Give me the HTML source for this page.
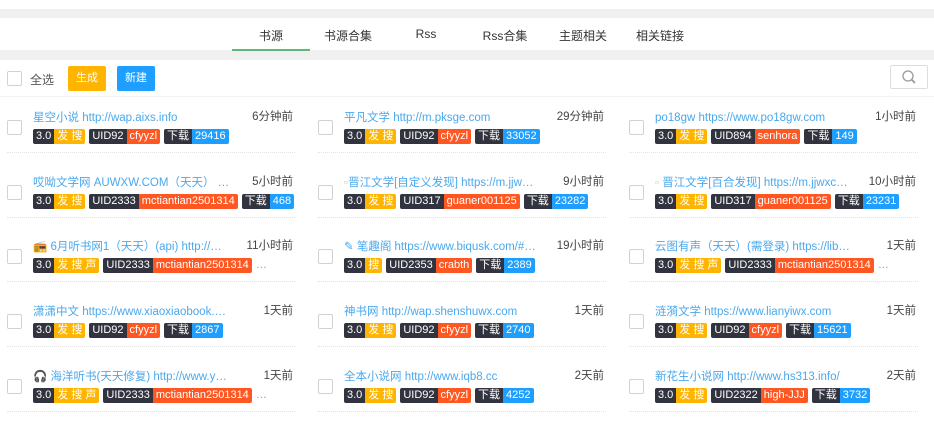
<!DOCTYPE html>
<html><head><meta charset="utf-8"><style>
*{box-sizing:border-box;margin:0;padding:0}
body{width:934px;height:433px;overflow:hidden;background:#fff;font-family:"Liberation Sans","Noto Sans CJK SC",sans-serif;position:relative}
.band{position:absolute;left:0;width:934px;background:#f0f0f0}
.tab{position:absolute;top:27px;font-size:12px;color:#333;width:78px;text-align:center}
.cb{position:absolute;width:15px;height:15px;border:1px solid #d2d2d2;border-radius:2px;background:#fff}
.it{position:absolute;height:44px}
.it .t{position:absolute;top:1px;left:26px;font-size:11.5px;color:#4aa8ec;white-space:nowrap;line-height:16px}
.it .tm{position:absolute;top:0;right:2px;font-size:11.5px;color:#444;line-height:16px}
.it .tg{position:absolute;top:20px;left:26px;display:flex;white-space:nowrap}
.it .cb{left:0;top:11px}
.it .sep{position:absolute;left:0;right:0;top:43px;border-top:1px dotted #e4e4e4}
.g{display:inline-flex;margin-right:4px;border-radius:2px;overflow:hidden;height:15px;font-size:11px;line-height:15px;color:#fff}
.g span{padding:0 3px}
.d{background:#31343f}.y{background:#ffb400}.r{background:#ff5722}.b{background:#1e9fff}
.e{font-size:11px;color:#999;line-height:15px}
</style></head><body>
<div class="band" style="top:9px;height:9px"></div>
<div class="band" style="top:50px;height:10px"></div>
<div class="tab" style="left:232px">书源</div>
<div style="position:absolute;left:232px;top:49px;width:78px;height:2px;background:#5fb878"></div>
<div class="tab" style="left:309px">书源合集</div>
<div class="tab" style="left:387px">Rss</div>
<div class="tab" style="left:466px">Rss合集</div>
<div class="tab" style="left:544px">主题相关</div>
<div class="tab" style="left:621px">相关链接</div>

<div class="cb" style="left:7px;top:71px"></div>
<div style="position:absolute;left:30px;top:71px;font-size:12px;color:#555">全选</div>
<div style="position:absolute;left:68px;top:66px;width:38px;height:25px;background:#ffb400;border-radius:2px;color:#fff;font-size:11px;text-align:center;line-height:25px">生成</div>
<div style="position:absolute;left:117px;top:66px;width:38px;height:25px;background:#1e9fff;border-radius:2px;color:#fff;font-size:11px;text-align:center;line-height:25px">新建</div>
<div style="position:absolute;left:890px;top:65px;width:38px;height:24px;border:1px solid #ddd;border-radius:2px">
<svg width="38" height="24" style="position:absolute;left:-1px;top:-1px"><circle cx="18" cy="11" r="5" fill="none" stroke="#999" stroke-width="1.3"/><line x1="21.5" y1="14.5" x2="25" y2="18" stroke="#999" stroke-width="1.8"/></svg></div>
<div style="position:absolute;left:0;top:96px;width:934px;border-top:1px solid #f2f2f2"></div>

<!-- column 1 -->
<div class="it" style="left:7px;top:109px;width:288px"><div class="cb"></div><div class="t">星空小说 http://wap.aixs.info</div><div class="tm">6分钟前</div><div class="tg"><span class="g"><span class="d">3.0</span><span class="y">发 搜</span></span><span class="g"><span class="d">UID92</span><span class="r">cfyyzl</span></span><span class="g"><span class="d">下载</span><span class="b">29416</span></span></div><div class="sep"></div></div>
<div class="it" style="left:7px;top:174px;width:288px"><div class="cb"></div><div class="t">哎呦文学网 AUWXW.COM（天天） …</div><div class="tm">5小时前</div><div class="tg"><span class="g"><span class="d">3.0</span><span class="y">发 搜</span></span><span class="g"><span class="d">UID2333</span><span class="r">mctiantian2501314</span></span><span class="g"><span class="d">下载</span><span class="b">468</span></span></div><div class="sep"></div></div>
<div class="it" style="left:7px;top:238px;width:288px"><div class="cb"></div><div class="t"><span style="color:#333">📻</span> 6月听书网1（天天）(api) http://…</div><div class="tm">11小时前</div><div class="tg"><span class="g"><span class="d">3.0</span><span class="y">发 搜 声</span></span><span class="g"><span class="d">UID2333</span><span class="r">mctiantian2501314</span></span><span class="e">…</span></div><div class="sep"></div></div>
<div class="it" style="left:7px;top:303px;width:288px"><div class="cb"></div><div class="t">潇潇中文 https://www.xiaoxiaobook.…</div><div class="tm">1天前</div><div class="tg"><span class="g"><span class="d">3.0</span><span class="y">发 搜</span></span><span class="g"><span class="d">UID92</span><span class="r">cfyyzl</span></span><span class="g"><span class="d">下载</span><span class="b">2867</span></span></div><div class="sep"></div></div>
<div class="it" style="left:7px;top:368px;width:288px"><div class="cb"></div><div class="t"><span style="color:#333">🎧</span> 海洋听书(天天修复) http://www.y…</div><div class="tm">1天前</div><div class="tg"><span class="g"><span class="d">3.0</span><span class="y">发 搜 声</span></span><span class="g"><span class="d">UID2333</span><span class="r">mctiantian2501314</span></span><span class="e">…</span></div><div class="sep"></div></div>

<!-- column 2 -->
<div class="it" style="left:318px;top:109px;width:288px"><div class="cb"></div><div class="t">平凡文学 http://m.pksge.com</div><div class="tm">29分钟前</div><div class="tg"><span class="g"><span class="d">3.0</span><span class="y">发 搜</span></span><span class="g"><span class="d">UID92</span><span class="r">cfyyzl</span></span><span class="g"><span class="d">下载</span><span class="b">33052</span></span></div><div class="sep"></div></div>
<div class="it" style="left:318px;top:174px;width:288px"><div class="cb"></div><div class="t"><span style="color:#bcd">▫</span>晋江文学[自定义发现] https://m.jjw…</div><div class="tm">9小时前</div><div class="tg"><span class="g"><span class="d">3.0</span><span class="y">发 搜</span></span><span class="g"><span class="d">UID317</span><span class="r">guaner001125</span></span><span class="g"><span class="d">下载</span><span class="b">23282</span></span></div><div class="sep"></div></div>
<div class="it" style="left:318px;top:238px;width:288px"><div class="cb"></div><div class="t">✎ 笔趣阁 https://www.biqusk.com/#…</div><div class="tm">19小时前</div><div class="tg"><span class="g"><span class="d">3.0</span><span class="y">搜</span></span><span class="g"><span class="d">UID2353</span><span class="r">crabth</span></span><span class="g"><span class="d">下载</span><span class="b">2389</span></span></div><div class="sep"></div></div>
<div class="it" style="left:318px;top:303px;width:288px"><div class="cb"></div><div class="t">神书网 http://wap.shenshuwx.com</div><div class="tm">1天前</div><div class="tg"><span class="g"><span class="d">3.0</span><span class="y">发 搜</span></span><span class="g"><span class="d">UID92</span><span class="r">cfyyzl</span></span><span class="g"><span class="d">下载</span><span class="b">2740</span></span></div><div class="sep"></div></div>
<div class="it" style="left:318px;top:368px;width:288px"><div class="cb"></div><div class="t">全本小说网 http://www.iqb8.cc</div><div class="tm">2天前</div><div class="tg"><span class="g"><span class="d">3.0</span><span class="y">发 搜</span></span><span class="g"><span class="d">UID92</span><span class="r">cfyyzl</span></span><span class="g"><span class="d">下载</span><span class="b">4252</span></span></div><div class="sep"></div></div>

<!-- column 3 -->
<div class="it" style="left:629px;top:109px;width:289px"><div class="cb"></div><div class="t">po18gw https://www.po18gw.com</div><div class="tm">1小时前</div><div class="tg"><span class="g"><span class="d">3.0</span><span class="y">发 搜</span></span><span class="g"><span class="d">UID894</span><span class="r">senhora</span></span><span class="g"><span class="d">下载</span><span class="b">149</span></span></div><div class="sep"></div></div>
<div class="it" style="left:629px;top:174px;width:289px"><div class="cb"></div><div class="t"><span style="color:#bcd">▫</span> 晋江文学[百合发现] https://m.jjwxc…</div><div class="tm">10小时前</div><div class="tg"><span class="g"><span class="d">3.0</span><span class="y">发 搜</span></span><span class="g"><span class="d">UID317</span><span class="r">guaner001125</span></span><span class="g"><span class="d">下载</span><span class="b">23231</span></span></div><div class="sep"></div></div>
<div class="it" style="left:629px;top:238px;width:289px"><div class="cb"></div><div class="t">云图有声（天天）(需登录) https://lib…</div><div class="tm">1天前</div><div class="tg"><span class="g"><span class="d">3.0</span><span class="y">发 搜 声</span></span><span class="g"><span class="d">UID2333</span><span class="r">mctiantian2501314</span></span><span class="e">…</span></div><div class="sep"></div></div>
<div class="it" style="left:629px;top:303px;width:289px"><div class="cb"></div><div class="t">涟漪文学 https://www.lianyiwx.com</div><div class="tm">1天前</div><div class="tg"><span class="g"><span class="d">3.0</span><span class="y">发 搜</span></span><span class="g"><span class="d">UID92</span><span class="r">cfyyzl</span></span><span class="g"><span class="d">下载</span><span class="b">15621</span></span></div><div class="sep"></div></div>
<div class="it" style="left:629px;top:368px;width:289px"><div class="cb"></div><div class="t">新花生小说网 http://www.hs313.info/</div><div class="tm">2天前</div><div class="tg"><span class="g"><span class="d">3.0</span><span class="y">发 搜</span></span><span class="g"><span class="d">UID2322</span><span class="r">high-JJJ</span></span><span class="g"><span class="d">下载</span><span class="b">3732</span></span></div><div class="sep"></div></div>
</body></html>
